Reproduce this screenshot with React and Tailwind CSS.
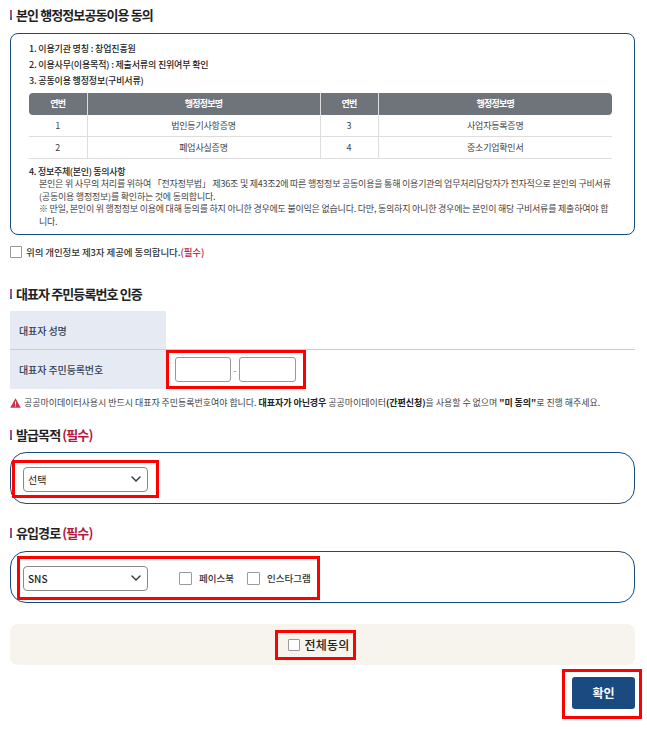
function Title({ children }) {
  return (
    <h2 className="flex items-center h-[20px] text-[13px] font-bold text-[#222] tracking-[-0.9px]">
      <span className="mr-[4px] w-[2px] h-[10px] bg-gradient-to-b from-[#e0335a] to-[#1d5fb8]" />
      <span>{children}</span>
    </h2>
  );
}

function Req() {
  return <span className="text-[#b5173f]">(필수)</span>;
}

function Check({ className = "" }) {
  return <span className={"block shrink-0 bg-white border border-[#9a9a9a] rounded-[1px] " + className} />;
}

function Sel({ children }) {
  return (
    <div className="flex items-center justify-between w-[125px] h-[25px] pl-[4px] pr-[6px] bg-white border border-[#8a8a8a] rounded-[4px] text-[10px] text-[#222]">
      <span>{children}</span>
      <svg width="10" height="6" viewBox="0 0 10 6" fill="none" stroke="#333" strokeWidth="1.4" strokeLinecap="round" strokeLinejoin="round">
        <path d="M1 1 5 5l4-4" />
      </svg>
    </div>
  );
}

const thCls = "bg-[#6f747b] text-white font-bold h-[22px] text-center tracking-[-0.8px]";
const tdCls = "h-[21.5px] text-center text-[#444] border-b border-[#ddd] tracking-[-0.2px]";

export default function App() {
  return (
    <div className="w-[647px] h-[729px] bg-white overflow-hidden pl-[10px] pr-[12px] pt-[5px] font-['Noto_Sans_CJK_KR',sans-serif]">
      <Title>본인 행정정보공동이용 동의</Title>

      <div className="mt-[8px] h-[202px] border border-[#1a4a80] rounded-[8px] pt-[7px] pl-[18px] pr-[22px]">
        <ol className="text-[9px] font-medium text-[#222] leading-[16px] tracking-[-0.17px]">
          <li>1. 이용기관 명칭 : 창업진흥원</li>
          <li>2. 이용사무(이용목적) : 제출서류의 진위여부 확인</li>
          <li>3. 공동이용 행정정보(구비서류)</li>
        </ol>
        <table className="mt-[4px] w-[583px] table-fixed border-collapse text-[9px]">
          <colgroup>
            <col className="w-[58px]" />
            <col className="w-[233px]" />
            <col className="w-[58px]" />
            <col className="w-[234px]" />
          </colgroup>
          <thead>
            <tr>
              <th className={thCls + " rounded-l-[4px] border-r border-[#ddd]"}>연번</th>
              <th className={thCls + " border-r border-[#ddd]"}>행정정보명</th>
              <th className={thCls + " border-r border-[#ddd]"}>연번</th>
              <th className={thCls + " rounded-r-[4px]"}>행정정보명</th>
            </tr>
          </thead>
          <tbody>
            <tr>
              <td className={tdCls + " border-r"}>1</td>
              <td className={tdCls + " border-r"}>법인등기사항증명</td>
              <td className={tdCls + " border-r"}>3</td>
              <td className={tdCls}>사업자등록증명</td>
            </tr>
            <tr>
              <td className={tdCls + " border-r"}>2</td>
              <td className={tdCls + " border-r"}>폐업사실증명</td>
              <td className={tdCls + " border-r"}>4</td>
              <td className={tdCls}>중소기업확인서</td>
            </tr>
          </tbody>
        </table>
        <div className="mt-[7px] text-[9px] font-medium text-[#222] leading-[12.5px] tracking-[-0.3px]">4. 정보주체(본인) 동의사항</div>
        <p className="pl-[10px] text-[9px] text-[#444] leading-[12.5px] tracking-[-0.22px] whitespace-nowrap">
          본인은 위 사무의 처리를 위하여 「전자정부법」 제36조 및 제43조2에 따른 행정정보 공동이용을 통해 이용기관의 업무처리담당자가 전자적으로 본인의 구비서류
          <br />
          (공동이용 행정정보)를 확인하는 것에 동의합니다.
          <br />
          ※ 만일, 본인이 위 행정정보 이용에 대해 동의를 하지 아니한 경우에도 불이익은 없습니다. 다만, 동의하지 아니한 경우에는 본인이 해당 구비서류를 제출하여야 합
          <br />
          니다.
        </p>
      </div>

      <label className="mt-[10px] flex items-center gap-[4px] h-[14px] text-[9.5px] font-medium text-[#333] tracking-[-0.1px]">
        <Check className="w-[12px] h-[12px]" />
        <span>위의 개인정보 제3자 제공에 동의합니다.<Req /></span>
      </label>

      <div className="mt-[25px]">
        <Title>대표자 주민등록번호 인증</Title>
      </div>

      <div className="mt-[7px] text-[10px] font-medium text-[#333f55] tracking-[-0.1px]">
        <div className="flex h-[39px] border-b border-[#ccc]">
          <div className="w-[156px] bg-[#e6eaf2] flex items-center pl-[9px]">대표자 성명</div>
        </div>
        <div className="flex h-[39px]">
          <div className="w-[156px] bg-[#e6eaf2] flex items-center pl-[9px]">대표자 주민등록번호</div>
          <div className="w-[140px] h-[39px] border-[3px] border-[#ff0000] flex items-center pl-[6px]">
            <span className="block w-[56px] h-[25px] border border-[#999] rounded-[3px] bg-white" />
            <span className="w-[8px] text-center text-[#888] font-normal">-</span>
            <span className="block w-[57px] h-[25px] border border-[#999] rounded-[3px] bg-white" />
          </div>
        </div>
      </div>

      <div className="mt-[6px] flex items-center h-[15px] text-[9px] text-[#444] whitespace-nowrap tracking-[-0.05px]">
        <svg width="11" height="10" viewBox="0 0 11 10" className="mr-[3px] shrink-0">
          <path d="M5.5.3 10.8 9.7H.2Z" fill="#d6304f" />
          <rect x="5" y="3.4" width="1" height="3.4" fill="#fff" />
          <rect x="5" y="7.5" width="1" height="1" fill="#fff" />
        </svg>
        <span>공공마이데이터사용시 반드시 대표자 주민등록번호여야 합니다. <b className="text-[#222]">대표자가 아닌경우</b> 공공마이데이터<b className="text-[#222]">(간편신청)</b>을 사용할 수 없으며 <b className="text-[#222]">"미 동의"</b>로 진행 해주세요.</span>
      </div>

      <div className="mt-[15px]">
        <Title>발급목적 <Req /></Title>
      </div>

      <div className="mt-[7px] h-[52px] border border-[#1a4a80] rounded-[16px] pt-[7px] pl-[1px]">
        <div className="w-[147px] h-[38px] border-[3px] border-[#ff0000] flex items-center pl-[8px]">
          <Sel>선택</Sel>
        </div>
      </div>

      <div className="mt-[19px]">
        <Title>유입경로 <Req /></Title>
      </div>

      <div className="mt-[8px] h-[52px] border border-[#1a4a80] rounded-[16px] pt-[4px] pl-[6px]">
        <div className="w-[303px] h-[44px] border-[3px] border-[#ff0000] flex items-center pl-[3px] text-[9.5px] font-medium text-[#333] tracking-[0px]">
          <Sel>SNS</Sel>
          <Check className="ml-[31px] w-[13px] h-[13px]" />
          <span className="ml-[7px]">페이스북</span>
          <Check className="ml-[13px] w-[13px] h-[13px]" />
          <span className="ml-[7px]">인스타그램</span>
        </div>
      </div>

      <div className="mt-[21px] h-[41px] bg-[#f7f3ed] rounded-[8px] flex items-center justify-center">
        <div className="mr-[15px] w-[81px] h-[30px] border-[3px] border-[#ff0000] flex items-center pl-[10px] gap-[5px] text-[12px] font-medium text-[#222] tracking-[0.2px]">
          <Check className="w-[12px] h-[12px]" />
          <span>전체동의</span>
        </div>
      </div>

      <div className="mt-[4px] flex justify-end -mr-[7px]">
        <div className="w-[80px] h-[50px] border-[3px] border-[#ff0000] flex items-center pl-[7px] pb-[2px]">
          <button className="w-[63px] h-[32px] bg-[#1a4a80] rounded-[3px] text-white text-[12px] font-bold">확인</button>
        </div>
      </div>
    </div>
  );
}
